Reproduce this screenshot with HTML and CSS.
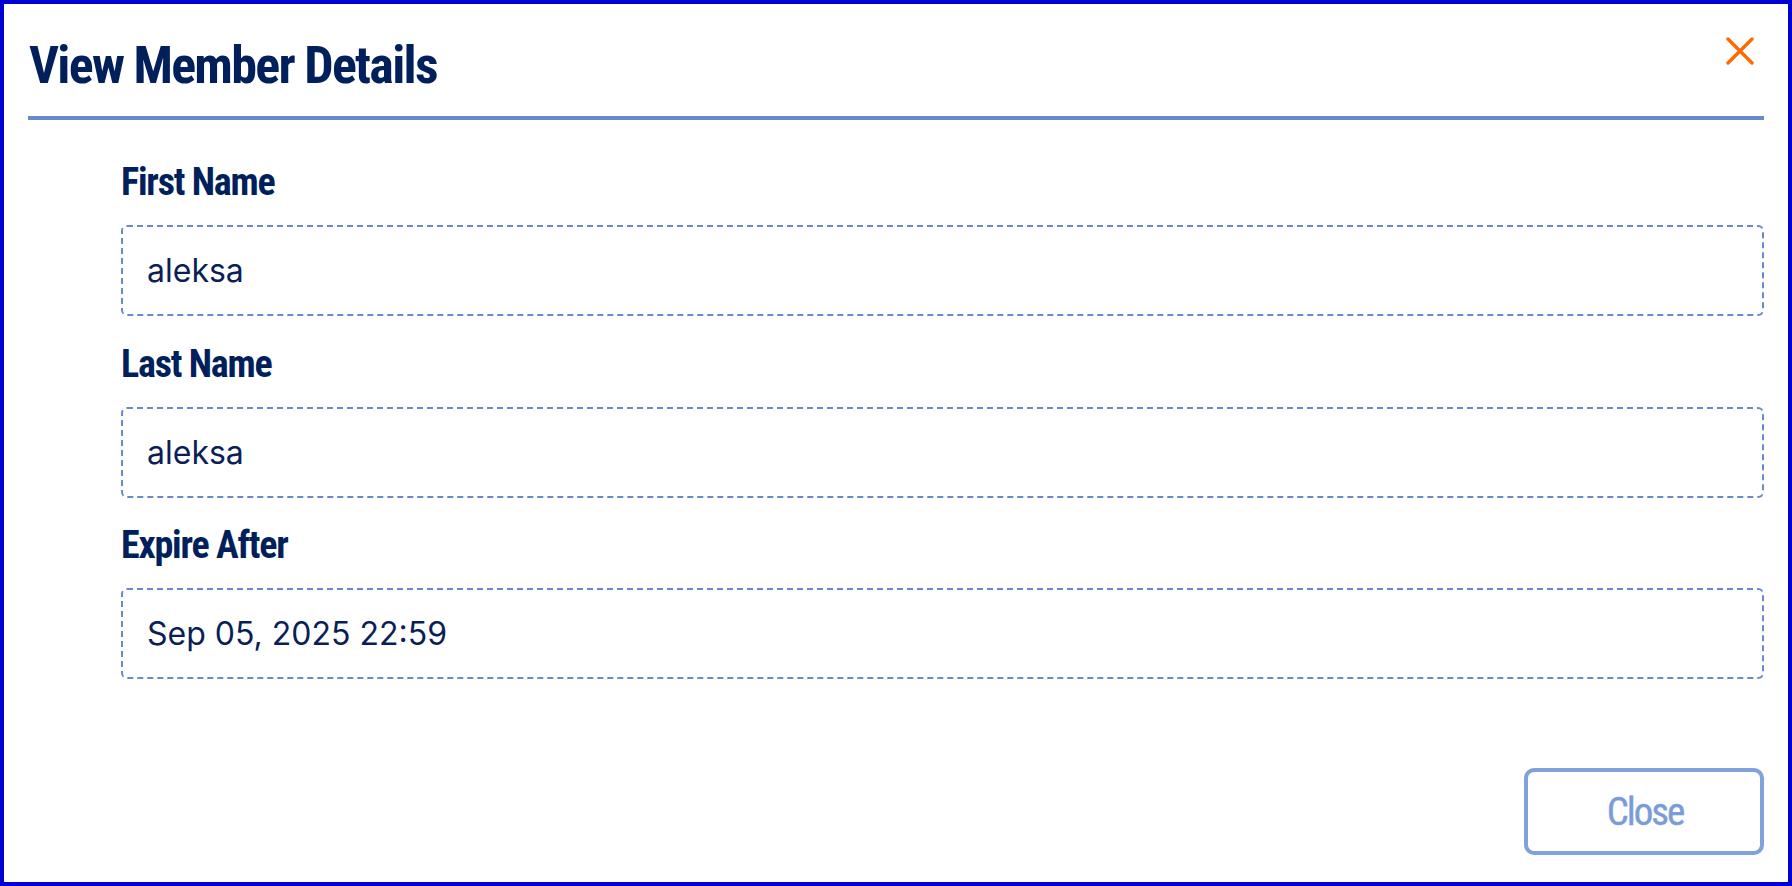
FILE: index.html
```html
<!DOCTYPE html>
<html lang="en">
<head>
<meta charset="utf-8">
<title>View Member Details</title>
<link rel="stylesheet" href="styles.css">
</head>
<body>
<div class="dialog">
  <header class="dialog-header">
    <h1 class="dialog-title">View Member Details</h1>
    <button class="icon-close" type="button" aria-label="Close">
      <svg width="28" height="28" viewBox="0 0 28 28" aria-hidden="true">
        <path d="M2 2 L26 26 M26 2 L2 26" fill="none" stroke="#ff6a00" stroke-width="3.4" stroke-linecap="round"/>
      </svg>
    </button>
  </header>
  <section class="dialog-body">
    <div class="field">
      <div class="field-label">First Name</div>
      <div class="field-value">aleksa</div>
    </div>
    <div class="field">
      <div class="field-label">Last Name</div>
      <div class="field-value">aleksa</div>
    </div>
    <div class="field">
      <div class="field-label">Expire After</div>
      <div class="field-value">Sep 05, 2025 22:59</div>
    </div>
  </section>
  <footer class="dialog-footer">
    <button class="btn-close" type="button">Close</button>
  </footer>
</div>
</body>
</html>
```

FILE: styles.css
```css
html, body {
  margin: 0;
  padding: 0;
  background: #ffffff;
}

.dialog {
  box-sizing: border-box;
  width: 1792px;
  height: 886px;
  border: 4px solid #0000d2;
  padding: 0 24px 27px;
  display: flex;
  flex-direction: column;
  background: #ffffff;
}

.dialog-header {
  display: flex;
  justify-content: space-between;
  align-items: flex-start;
  padding: 34px 0 22px;
  border-bottom: 4px solid #6689d0;
}

.dialog-title {
  margin: 0 0 0 1px;
  font-family: "Roboto Condensed", "Liberation Sans Narrow", "DejaVu Sans Condensed", sans-serif;
  font-stretch: condensed;
  font-weight: 700;
  font-size: 52px;
  line-height: 56px;
  letter-spacing: -1.7px;
  color: #001f5b;
}

.icon-close {
  margin: -1px 10px 0 0;
  padding: 0;
  border: 0;
  background: none;
  width: 28px;
  height: 28px;
  display: flex;
}

.dialog-body {
  padding: 42px 0 0 93px;
  display: flex;
  flex-direction: column;
  gap: 27.5px;
}

.field-label {
  font-family: "Roboto Condensed", "Liberation Sans Narrow", "DejaVu Sans Condensed", sans-serif;
  font-stretch: condensed;
  font-weight: 700;
  font-size: 38px;
  line-height: 40px;
  letter-spacing: -1.2px;
  color: #001f5b;
  margin-bottom: 23px;
}

.field-value {
  box-sizing: border-box;
  height: 91px;
  border: 2px dashed #6689d0;
  border-radius: 6px;
  padding: 0 24px;
  display: flex;
  align-items: center;
  font-family: Inter, "Noto Sans", sans-serif;
  font-size: 32px;
  color: #0b1f57;
}

.dialog-footer {
  margin-top: auto;
  display: flex;
  justify-content: flex-end;
}

.btn-close {
  box-sizing: border-box;
  width: 240px;
  height: 87px;
  border: 4px solid #80a2dc;
  border-radius: 10px;
  background: #ffffff;
  font-family: "Roboto Condensed", "Liberation Sans Narrow", "DejaVu Sans Condensed", sans-serif;
  font-stretch: condensed;
  font-weight: 400;
  font-size: 39px;
  letter-spacing: -2px;
  color: #7b9cd9;
  padding: 0 0 0 2px;
  -webkit-text-stroke: 0.4px #7b9cd9;
}
```
